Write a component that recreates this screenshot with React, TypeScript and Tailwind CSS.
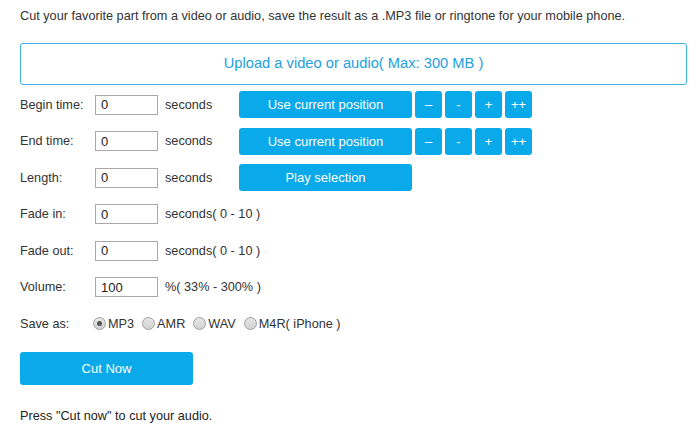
import React from 'react';

const btn = 'flex items-center justify-center rounded-[3px] bg-[#0aa9e9] text-white text-[13px]';

const Field: React.FC<{ label: string; value: string; unit: string; children?: React.ReactNode }> = ({
  label,
  value,
  unit,
  children,
}) => (
  <div className="flex h-[36.5px] items-center">
    <div className="w-[75px] shrink-0 text-[#333]">{label}</div>
    <input
      readOnly
      value={value}
      className="h-[20px] w-[63px] shrink-0 border border-[#a9a9a9] bg-white px-[5px] text-[13px] text-[#222] outline-none"
    />
    <div className="ml-[7px] w-[74px] shrink-0 whitespace-nowrap text-[#333]">{unit}</div>
    {children}
  </div>
);

const Stepper: React.FC = () => (
  <div className="flex gap-[3px]">
    <div className={`${btn} h-[27px] w-[173px]`}>Use current position</div>
    {['--', '-', '+', '++'].map((s) => (
      <div key={s} className={`${btn} h-[27px] w-[27px] text-[12px]`}>
        {s === '--' ? '\u2013' : s}
      </div>
    ))}
  </div>
);

const Radio: React.FC<{ label: string; checked?: boolean }> = ({ label, checked }) => (
  <div className="flex items-center">
    <span className="flex h-[13px] w-[13px] items-center justify-center rounded-full border border-[#a0a0a0] bg-gradient-to-b from-[#e6e6e6] to-[#d2d2d2]">
      {checked && <span className="h-[5px] w-[5px] rounded-full bg-[#555]" />}
    </span>
    <span className="ml-[2px] text-[#333]">{label}</span>
  </div>
);

const App: React.FC = () => {
  return (
    <div
      className="h-[431px] w-[700px] overflow-hidden bg-white pl-[20px] text-[12.7px] leading-none"
      style={{ fontFamily: '"Liberation Sans", Arial, sans-serif' }}
    >
      <p className="pt-[10px] text-[#333]">
        Cut your favorite part from a video or audio, save the result as a .MP3 file or ringtone for your mobile phone.
      </p>

      <div className="mt-[20px] flex h-[42px] w-[667px] items-center justify-center rounded-[3px] border border-[#3db3e6] text-[14.7px] text-[#23a1dd]">
        Upload a video or audio( Max: 300 MB )
      </div>

      <div className="mt-[2px]">
        <Field label="Begin time:" value="0" unit="seconds">
          <Stepper />
        </Field>
        <Field label="End time:" value="0" unit="seconds">
          <Stepper />
        </Field>
        <Field label="Length:" value="0" unit="seconds">
          <div className={`${btn} h-[27px] w-[173px]`}>Play selection</div>
        </Field>
        <Field label="Fade in:" value="0" unit="seconds( 0 - 10 )" />
        <Field label="Fade out:" value="0" unit="seconds( 0 - 10 )" />
        <Field label="Volume:" value="100" unit="%( 33% - 300% )" />
        <div className="flex h-[36.5px] items-center">
          <div className="w-[73px] shrink-0 text-[#333]">Save as:</div>
          <div className="flex gap-[8px]">
            <Radio label="MP3" checked />
            <Radio label="AMR" />
            <Radio label="WAV" />
            <Radio label="M4R( iPhone )" />
          </div>
        </div>
      </div>

      <div className={`${btn} mt-[9.5px] h-[33px] w-[173px]`}>Cut Now</div>

      <p className="mt-[25px] text-[#222]">Press "Cut now" to cut your audio.</p>
    </div>
  );
};

export default App;
